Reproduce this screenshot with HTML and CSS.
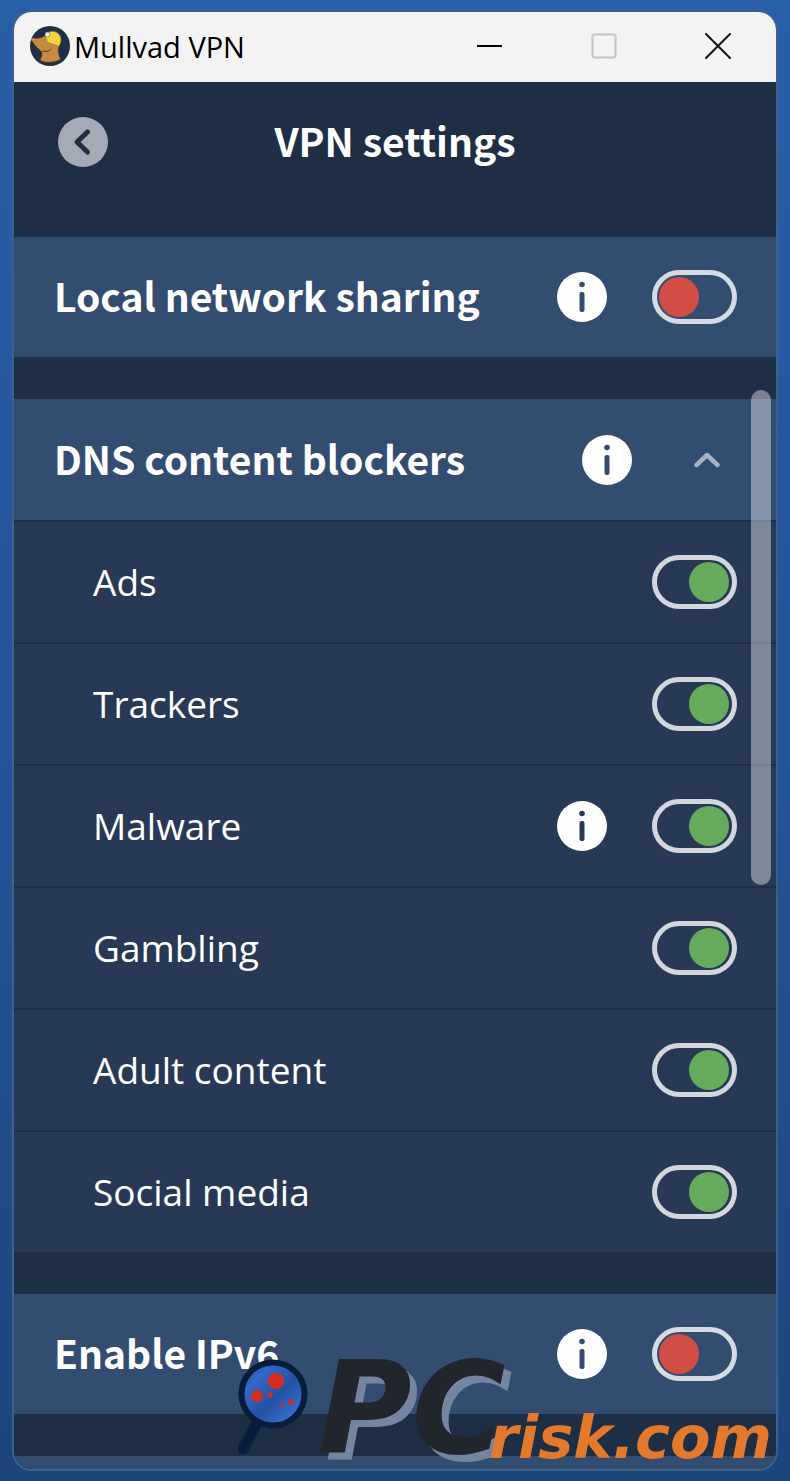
FILE: index.html
```html
<!DOCTYPE html>
<html lang="en">
<head>
    <meta charset="UTF-8">
    <meta name="viewport" content="width=device-width, initial-scale=1.0">
    <title>Mullvad VPN</title>
    <link rel="stylesheet" href="styles.css">
</head>
<body>
    <!-- Shared info icon -->
    <svg class="defs" width="0" height="0" aria-hidden="true">
        <symbol id="info" viewBox="0 0 50 50">
            <circle cx="25" cy="25" r="25" fill="#fff"/>
            <circle cx="25" cy="12.5" r="2.8" fill="currentColor"/>
            <rect x="22.5" y="20" width="5" height="20" rx="2" fill="currentColor"/>
        </symbol>
    </svg>

    <div class="window">
        <!-- Title bar -->
        <div class="title-bar">
            <svg class="app-icon" viewBox="0 0 40 40" aria-hidden="true">
                <circle cx="20" cy="20" r="20" fill="#1f2e44"/>
                <path d="M1.5 14 C2 12 4 12 6 12.5 C10 12.5 13 11 16 9 C19 14 23 17 28.5 20.5 C28 24 28 28 30.5 33 C27 36.5 14 37.5 10 34 C12 31 12.5 28 11.5 25.5 C7 22 4 18.5 1.5 14 Z" fill="#c58c40" stroke="#5b421f" stroke-width=".6"/>
                <path d="M15 9.5 C15 7 16.5 5.8 18.5 6.2 C24 3.5 31 7.5 31 13.5 C31 16.5 30 19 28.5 20.8 C25.5 18 19 18 17 15.5 Z" fill="#f8d43c" stroke="#7a6420" stroke-width=".5"/>
                <circle cx="17.5" cy="8.5" r="2.4" fill="#f3f3ee" stroke="#5b5b55" stroke-width=".6"/>
                <path d="M1.5 14.5 C1 12.5 2.5 12 4.5 12.8 Z" fill="#e8a48e"/>
                <path d="M13 25 C16 26 19 25.5 21 23" fill="none" stroke="#3b2b16" stroke-width=".9" stroke-linecap="round"/>
            </svg>
            <span class="app-name">Mullvad VPN</span>
            <div class="window-buttons">
                <button type="button" aria-label="Minimize">
                    <svg viewBox="0 0 26 26"><path d="M0 13H25" stroke="#000" stroke-width="2.2"/></svg>
                </button>
                <button type="button" aria-label="Maximize" disabled>
                    <svg viewBox="0 0 26 26"><rect x="1.5" y="1.5" width="23" height="23" rx="2" fill="none" stroke="#c3c3c3" stroke-width="2"/></svg>
                </button>
                <button type="button" aria-label="Close">
                    <svg viewBox="0 0 26 26"><path d="M1 1L25 25M25 1L1 25" stroke="#111" stroke-width="2" stroke-linecap="round"/></svg>
                </button>
            </div>
        </div>

        <!-- Page header -->
        <header class="header">
            <button type="button" class="back-button" aria-label="Back">
                <svg viewBox="0 0 50 50"><path d="M29.5 15L19 25L29.5 35" fill="none" stroke="#1e2e44" stroke-width="5" stroke-linecap="round" stroke-linejoin="round"/></svg>
            </button>
            <h1>VPN settings</h1>
        </header>

        <!-- Settings -->
        <main class="settings">
            <section class="group">
                <div class="row">
                    <label for="lan">Local network sharing</label>
                    <button type="button" class="info" aria-label="About local network sharing"><svg><use href="#info"/></svg></button>
                    <input type="checkbox" class="switch" id="lan">
                </div>
            </section>

            <section class="group">
                <div class="row row-expand">
                    <h2>DNS content blockers</h2>
                    <button type="button" class="info" aria-label="About DNS content blockers"><svg><use href="#info"/></svg></button>
                    <button type="button" class="chevron" aria-label="Collapse" aria-expanded="true">
                        <svg viewBox="0 0 26 16"><path d="M2.5 13L13 3L23.5 13" fill="none" stroke="#a6b2c4" stroke-width="4.5" stroke-linecap="round" stroke-linejoin="round"/></svg>
                    </button>
                </div>
                <div class="row sub-row">
                    <label for="ads">Ads</label>
                    <input type="checkbox" class="switch" id="ads" checked>
                </div>
                <div class="row sub-row">
                    <label for="trackers">Trackers</label>
                    <input type="checkbox" class="switch" id="trackers" checked>
                </div>
                <div class="row sub-row">
                    <label for="malware">Malware</label>
                    <button type="button" class="info" aria-label="About malware"><svg><use href="#info"/></svg></button>
                    <input type="checkbox" class="switch" id="malware" checked>
                </div>
                <div class="row sub-row">
                    <label for="gambling">Gambling</label>
                    <input type="checkbox" class="switch" id="gambling" checked>
                </div>
                <div class="row sub-row">
                    <label for="adult">Adult content</label>
                    <input type="checkbox" class="switch" id="adult" checked>
                </div>
                <div class="row sub-row">
                    <label for="social">Social media</label>
                    <input type="checkbox" class="switch" id="social" checked>
                </div>
            </section>

            <section class="group">
                <div class="row">
                    <label for="ipv6">Enable IPv6</label>
                    <button type="button" class="info" aria-label="About IPv6"><svg><use href="#info"/></svg></button>
                    <input type="checkbox" class="switch" id="ipv6">
                </div>
            </section>

            <section class="next-group"></section>
            <div class="scrollbar"></div>
        </main>
    </div>

    <!-- Watermark -->
    <div class="watermark">
        <svg class="lens" viewBox="0 0 70 96" aria-hidden="true">
            <defs>
                <linearGradient id="glass" x1="0" y1="0" x2="1" y2="1">
                    <stop offset="0" stop-color="#2450a0"/>
                    <stop offset=".25" stop-color="#3268c6"/>
                    <stop offset=".55" stop-color="#2452a4"/>
                    <stop offset="1" stop-color="#3f7fe4"/>
                </linearGradient>
            </defs>
            <path d="M20 62L5 90" stroke="#071d3b" stroke-width="11" stroke-linecap="round"/>
            <circle cx="35" cy="35" r="31.5" fill="url(#glass)" stroke="#071d3b" stroke-width="6"/>
            <g fill="#d92c20">
                <circle cx="38" cy="22" r="8"/>
                <circle cx="19" cy="37" r="6"/>
                <circle cx="32" cy="36" r="2.5"/>
                <circle cx="53" cy="43" r="2.8"/>
                <circle cx="44" cy="47" r="1.7"/>
            </g>
        </svg>
        <span class="mark-pc">PC</span>
        <span class="mark-risk">risk.com</span>
    </div>

    <script>
        // Collapse and expand the blocker list
        const chevron = document.querySelector('.chevron');
        chevron.onclick = function() {
            const open = chevron.getAttribute('aria-expanded') === 'true';
            chevron.setAttribute('aria-expanded', String(!open));
            document.querySelectorAll('.sub-row').forEach(function(row) {
                row.classList.toggle('hidden', open);
            });
        };
    </script>
</body>
</html>
```
FILE: styles.css
```css
* {
    box-sizing: border-box;
}

body {
    margin: 0;
    padding: 10px 12px;
    min-height: 100vh;
    display: flex;
    position: relative;
    background: linear-gradient(to bottom, #295ea8, #24549a 50%, #1c457c);
    font-family: "Open Sans", "Noto Sans", sans-serif;
    color: #fff;
}

button {
    border: none;
    padding: 0;
    background: none;
    cursor: pointer;
}

svg {
    display: block;
}

.defs {
    position: absolute;
}

.window {
    flex: 1;
    display: flex;
    flex-direction: column;
    border: 2px solid #3e618b;
    border-radius: 20px;
    background: #1e2e44;
    overflow: hidden;
}

/* Title bar */
.title-bar {
    display: flex;
    align-items: center;
    height: 70px;
    padding: 0 1px 2px 16px;
    background: #f3f3f3;
    color: #000;
}

.app-icon {
    width: 40px;
    height: 40px;
}

.app-name {
    margin-left: 4px;
    font-size: 29px;
}

.window-buttons {
    display: flex;
    margin-left: auto;
}

.window-buttons button {
    display: flex;
    justify-content: center;
    align-items: center;
    width: 114px;
    height: 68px;
}

.window-buttons svg {
    width: 26px;
    height: 26px;
}

/* Header */
.header {
    display: grid;
    grid-template-columns: 1fr auto 1fr;
    align-items: center;
    padding: 35px 44px 70px;
}

.back-button {
    width: 50px;
    height: 50px;
    border-radius: 50%;
    background: #a5abb4;
}

h1, h2 {
    margin: 0;
}

h1, .row {
    font-family: "Noto Sans CJK SC", "Open Sans", sans-serif;
    font-size: 39px;
    font-weight: 700;
    line-height: 46px;
}

/* Lift the tall font so its capitals sit in the middle */
h1, .row label, .row h2 {
    padding-bottom: 4px;
}

h2 {
    font-size: inherit;
}

/* Settings rows */
.settings {
    flex: 1;
    display: flex;
    flex-direction: column;
    gap: 42px;
    position: relative;
}

.row {
    display: flex;
    align-items: center;
    gap: 45px;
    height: 120px;
    padding: 0 39px 0 40px;
    background: #334d70;
}

.row label, .row h2 {
    flex: 1;
}

.row-expand {
    height: 121px;
}

.row.sub-row {
    height: 122px;
    padding-left: 79px;
    border-top: 2px solid #1e2e44;
    background: #273954;
    font-family: "Open Sans", "Noto Sans", sans-serif;
    font-size: 37px;
    font-weight: 400;
}

.row.hidden {
    display: none;
}

.row.sub-row label {
    padding-bottom: 0;
}

.info {
    width: 50px;
    height: 50px;
    color: #334d70;
}

.sub-row .info {
    color: #273954;
}

.info svg {
    width: 50px;
    height: 50px;
}

.chevron {
    display: flex;
    justify-content: center;
    align-items: center;
    width: 60px;
    height: 50px;
}

.chevron svg {
    width: 26px;
    height: 16px;
}

.chevron[aria-expanded="false"] svg {
    transform: rotate(180deg);
}

/* Toggle switch */
.switch {
    appearance: none;
    display: flex;
    align-items: center;
    width: 85px;
    height: 54px;
    margin: 0;
    padding: 0 3px 0 2px;
    border: 5px solid rgba(255, 255, 255, 0.8);
    border-radius: 27px;
    cursor: pointer;
}

.switch::before {
    content: "";
    width: 40px;
    height: 40px;
    border-radius: 50%;
    background: #d04e43;
}

.switch:checked {
    justify-content: flex-end;
}

.switch:checked::before {
    background: #66aa5b;
}

.next-group {
    flex: 1;
    background: #334d70;
}

.scrollbar {
    position: absolute;
    top: 153px;
    right: 5px;
    width: 20px;
    height: 495px;
    border-radius: 10px;
    background: rgba(255, 255, 255, 0.4);
}

/* Watermark over the window */
.watermark {
    position: absolute;
    right: 18px;
    bottom: 10px;
    width: 534px;
    height: 116px;
    pointer-events: none;
    font-family: "DejaVu Sans", sans-serif;
    font-weight: 700;
    font-style: italic;
}

.lens {
    position: absolute;
    left: 0;
    top: 4px;
    width: 70px;
    height: 96px;
}

.mark-pc {
    position: absolute;
    left: 80px;
    bottom: 15px;
    font-size: 128px;
    line-height: 94px;
    color: #20262c;
    text-shadow: 7px 7px 0 #7485a0;
}

.mark-risk {
    position: absolute;
    right: 0;
    bottom: 3px;
    font-size: 59px;
    line-height: 60px;
    color: #e2792d;
}
```
